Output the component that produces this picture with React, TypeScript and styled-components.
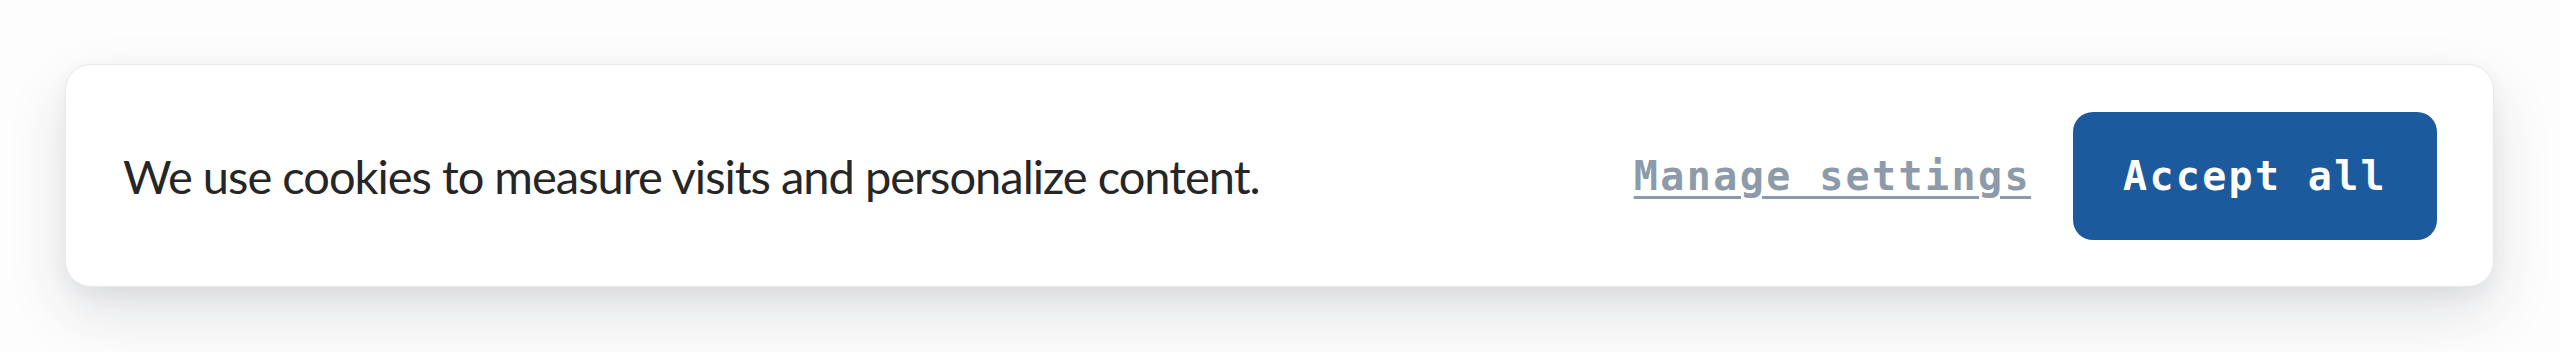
import React from "react";
import styled, { createGlobalStyle } from "styled-components";

const Global = createGlobalStyle`
  html, body { margin: 0; padding: 0; background: #fdfdfd; }
  #root { width: 2560px; height: 352px; }
`;

const Page = styled.div`
  box-sizing: border-box;
  width: 2560px;
  height: 352px;
  padding: 64px 66px 0 65px;
`;

const Banner = styled.div`
  box-sizing: border-box;
  height: 223px;
  display: flex;
  align-items: center;
  justify-content: space-between;
  padding: 0 56px 0 57px;
  background: #ffffff;
  border: 1px solid #e6e9f0;
  border-radius: 26px;
  box-shadow: 0 26px 60px rgba(30, 41, 59, 0.13), 0 8px 20px rgba(30, 41, 59, 0.05);
`;

const Message = styled.p`
  margin: 0;
  font-family: Lato, "Noto Sans", sans-serif;
  font-size: 47px;
  font-weight: 400;
  color: #262626;
  letter-spacing: -1px;
`;

const Actions = styled.div`
  display: flex;
  align-items: center;
  gap: 42px;
`;

const LinkButton = styled.a`
  font-family: "DejaVu Sans Mono", "Liberation Mono", monospace;
  font-size: 40px;
  font-weight: 700;
  letter-spacing: 2.4px;
  color: #8d9aa9;
  text-decoration: underline;
  text-decoration-thickness: 3px;
  text-underline-offset: 6px;
  cursor: pointer;
`;

const PrimaryButton = styled.button`
  box-sizing: border-box;
  width: 364px;
  height: 128px;
  border: none;
  border-radius: 20px;
  background: #1b5a9d;
  color: #ffffff;
  font-family: "DejaVu Sans Mono", "Liberation Mono", monospace;
  font-size: 40px;
  font-weight: 700;
  letter-spacing: 2.3px;
  cursor: pointer;
`;

export default function App() {
  return (
    <>
      <Global />
      <Page>
        <Banner>
          <Message>We use cookies to measure visits and personalize content.</Message>
          <Actions>
            <LinkButton>Manage settings</LinkButton>
            <PrimaryButton>Accept all</PrimaryButton>
          </Actions>
        </Banner>
      </Page>
    </>
  );
}
